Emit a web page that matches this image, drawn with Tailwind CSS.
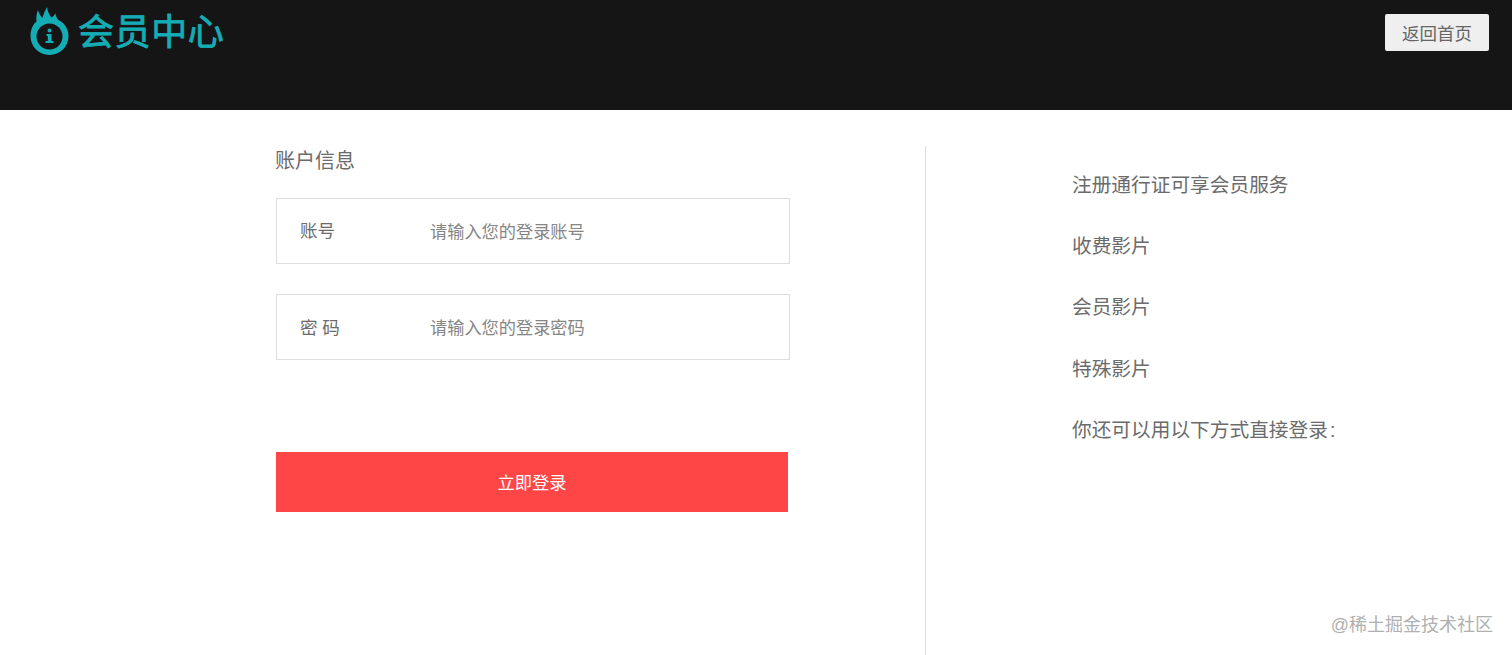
<!DOCTYPE html>
<html lang="zh-CN">
  <head>
    <meta charset="UTF-8" />
    <meta name="viewport" content="width=device-width, initial-scale=1.0" />
    <script src="https://cdn.jsdelivr.net/npm/@tailwindcss/browser@4"></script>
    <title>会员中心</title>
  </head>
  <body class="relative h-[655px] overflow-hidden bg-white font-['Liberation_Sans','Noto_Sans_CJK_SC',sans-serif] text-[#6b6b6b]">
    <!-- Header -->
    <header class="flex h-[110px] items-start justify-between bg-[#151515] pl-[30px] pr-[23px]">
      <div class="flex items-start gap-[9px] pt-[7px]">
        <svg class="h-[49px] w-[39px]" viewBox="0 0 39 49">
          <path fill="#14adb5" d="M19.500 48C9 48 0.500 39.500 0.500 29C0.500 22 3.500 17 6.500 14.500C6 10.500 6.500 6.500 8 3C9 6.500 10.500 9 12.500 11C13.500 7 15 3.500 17 0C17.500 4 19 7.500 21.500 10.500C23 9.500 24.500 8 25.500 6C25.500 8.500 26.500 11 28.500 13C34.500 16 38.500 22 38.500 29C38.500 39.500 30 48 19.500 48Z" />
          <circle cx="19.500" cy="29.500" r="13" fill="#151515" />
          <circle cx="19.500" cy="23.500" r="2" fill="#14adb5" />
          <path fill="#14adb5" d="M16.500 27H21.500V34H23.500V36H15.500V34H17.800V29H16.500Z" />
        </svg>
        <span class="pt-[6px] text-[36px] leading-[40px] tracking-[0.6px] text-[#14adb5] [-webkit-text-stroke:0.8px_#14adb5]">会员中心</span>
      </div>
      <button class="mt-[14px] h-[37px] w-[104px] rounded-[2px] bg-[#efefef] pt-[3px] text-[17.500px] text-[#666]">返回首页</button>
    </header>

    <main class="flex h-[545px] pt-[36px]">
      <!-- Login form -->
      <section class="ml-[276px] w-[514px]">
        <h2 class="-ml-px text-[20px] leading-[30px] font-normal">账户信息</h2>
        <div class="mt-[22px] flex h-[66px] items-center border border-[#ddd] pl-[23px] text-[17.500px]">
          <span class="w-[130px]">账号</span>
          <span class="pt-[3px] text-[17.200px] text-[#858585]">请输入您的登录账号</span>
        </div>
        <div class="mt-[30px] flex h-[66px] items-center border border-[#ddd] pl-[23px] text-[17.500px]">
          <span class="w-[130px] pt-[2px]">密 码</span>
          <span class="pt-[4px] text-[17.200px] text-[#858585]">请输入您的登录密码</span>
        </div>
        <button class="mt-[92px] h-[60px] w-[512px] bg-[#ff4646] pt-[4px] text-[17.300px] text-white">立即登录</button>
      </section>

      <!-- Divider -->
      <div class="ml-[135px] w-px bg-[#ddd]"></div>

      <!-- Member info -->
      <section class="ml-[146px] flex flex-col gap-[33.200px] pt-[25px] text-[19.700px] leading-[28px]">
        <p>注册通行证可享会员服务</p>
        <p>收费影片</p>
        <p>会员影片</p>
        <p>特殊影片</p>
        <p>你还可以用以下方式直接登录<span class="ml-[2px]">:</span></p>
      </section>
    </main>

    <span class="absolute top-[613px] right-[19px] text-[18px] leading-[24px] text-[#b0b0b0]">@稀土掘金技术社区</span>
  </body>
</html>
